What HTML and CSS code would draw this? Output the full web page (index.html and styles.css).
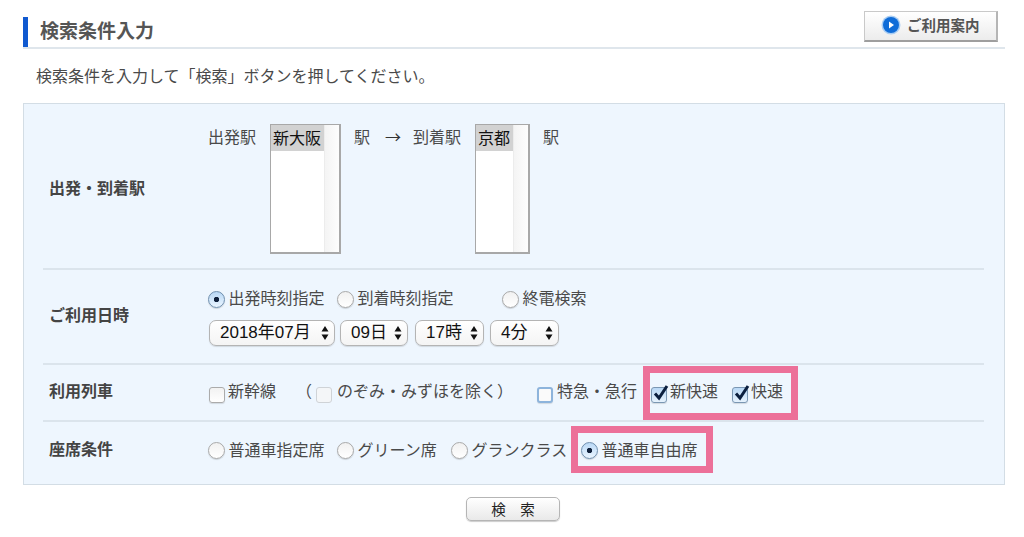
FILE: index.html
```html
<!DOCTYPE html>
<html lang="ja">
<head>
<meta charset="utf-8">
<title>検索条件入力</title>
<link rel="stylesheet" href="styles.css">
</head>
<body>
<main class="page">
  <header class="head">
    <h1 class="title">検索条件入力</h1>
    <a class="guide">
      <svg class="guide-icon" viewBox="0 0 20 20" width="20" height="20"><circle cx="10" cy="10" r="9.5" fill="#a9cdf3"/><circle cx="10" cy="10" r="8" fill="#0f6cd8"/><path d="M8 6.5 L13 10 L8 13.5 Z" fill="#fff"/></svg>
      <span>ご利用案内</span>
    </a>
  </header>
  <p class="lead">検索条件を入力して「検索」ボタンを押してください。</p>
  <section class="panel">
    <div class="row row-station">
      <div class="label">出発・到着駅</div>
      <div class="stations">
        <span class="st-text">出発駅</span>
        <div class="listbox lb-from"><div class="lb-main"><div class="lb-sel">新大阪</div></div><div class="lb-bar"></div></div>
        <span class="st-text st-eki">駅</span>
        <span class="st-text st-arrow">→</span>
        <span class="st-text st-to">到着駅</span>
        <div class="listbox lb-to"><div class="lb-main"><div class="lb-sel">京都</div></div><div class="lb-bar"></div></div>
        <span class="st-text st-eki">駅</span>
      </div>
    </div>
    <div class="row row-date">
      <div class="label">ご利用日時</div>
      <div class="controls">
        <div class="line line-time">
          <label class="opt w-a"><span class="radio on"></span>出発時刻指定</label>
          <label class="opt w-b"><span class="radio"></span>到着時刻指定</label>
          <label class="opt"><span class="radio"></span>終電検索</label>
        </div>
        <div class="line selects">
          <div class="select s1"><span>2018年07月</span><svg class="updown" viewBox="0 0 8 14" width="8" height="14"><path d="M4 0 L7.5 5.5 H.5 Z M4 14 L.5 8.5 H7.5 Z" fill="#111"/></svg></div>
          <div class="select s2"><span>09日</span><svg class="updown" viewBox="0 0 8 14" width="8" height="14"><path d="M4 0 L7.5 5.5 H.5 Z M4 14 L.5 8.5 H7.5 Z" fill="#111"/></svg></div>
          <div class="select s3"><span>17時</span><svg class="updown" viewBox="0 0 8 14" width="8" height="14"><path d="M4 0 L7.5 5.5 H.5 Z M4 14 L.5 8.5 H7.5 Z" fill="#111"/></svg></div>
          <div class="select s4"><span>4分</span><svg class="updown" viewBox="0 0 8 14" width="8" height="14"><path d="M4 0 L7.5 5.5 H.5 Z M4 14 L.5 8.5 H7.5 Z" fill="#111"/></svg></div>
        </div>
      </div>
    </div>
    <div class="row row-train">
      <div class="label">利用列車</div>
      <div class="line train">
        <label class="opt t1"><span class="check"></span>新幹線</label>
        <span class="paren-open">（</span>
        <label class="opt t2"><span class="check dim"></span>のぞみ・みずほを除く）</label>
        <label class="opt t3"><span class="check focus"></span>特急・急行</label>
        <label class="opt t4"><span class="check on"><svg class="tick" viewBox="0 0 18 18" width="18" height="18"><path d="M3 9.5 L7 14 L15 2" fill="none" stroke="#0b1f3f" stroke-width="3"/></svg></span>新快速</label>
        <label class="opt t5"><span class="check on"><svg class="tick" viewBox="0 0 18 18" width="18" height="18"><path d="M3 9.5 L7 14 L15 2" fill="none" stroke="#0b1f3f" stroke-width="3"/></svg></span>快速</label>
      </div>
      <div class="mark mark-train"></div>
    </div>
    <div class="row row-seat">
      <div class="label">座席条件</div>
      <div class="line seat">
        <label class="opt w-a"><span class="radio"></span>普通車指定席</label>
        <label class="opt w-c"><span class="radio"></span>グリーン席</label>
        <label class="opt w-d"><span class="radio"></span>グランクラス</label>
        <label class="opt"><span class="radio on"></span>普通車自由席</label>
      </div>
      <div class="mark mark-seat"></div>
    </div>
  </section>
  <div class="actions"><button class="search" type="button">検　索</button></div>
</main>
</body>
</html>
```

FILE: styles.css
```css
* { box-sizing: border-box; }
html, body { margin: 0; padding: 0; background: #fff; }
body {
  font-family: "Noto Sans CJK JP", "Liberation Sans", sans-serif;
  font-size: 16px;
  line-height: 24px;
  color: #4a4a4a;
  width: 1024px;
  height: 537px;
  overflow: hidden;
}
.page { width: 982px; margin-left: 23px; padding-top: 11px; }

.head {
  display: flex;
  justify-content: space-between;
  align-items: flex-start;
  height: 38px;
  border-bottom: 2px solid #dfe6ec;
  padding-right: 7px;
}
.title {
  margin: 6px 0 0;
  height: 30px;
  font-size: 19px;
  line-height: 26px;
  font-weight: 700;
  color: #555;
  border-left: 5px solid #1059d0;
  padding-left: 12px;
}
.guide {
  width: 134px;
  height: 31px;
  display: flex;
  align-items: center;
  gap: 6px;
  padding-left: 16px;
  padding-bottom: 2px;
  font-size: 14.5px;
  font-weight: 700;
  color: #555;
  background: linear-gradient(#fff, #ececec);
  border: 1px solid #c9c9c9;
  border-bottom: 2px solid #9e9e9e;
  border-right: 2px solid #b5b5b5;
}
.guide-icon { flex: none; }

.lead { margin: 14px 0 0 13px; height: 24px; }

.panel {
  margin-top: 16px;
  height: 382px;
  background: #eef6fe;
  border: 1px solid #d3dde5;
  padding: 0 20px 0 19px;
}
.row {
  position: relative;
  display: flex;
  align-items: center;
  border-bottom: 2px solid #dbe4ec;
}
.row-station { height: 166px; }
.row-date { height: 95px; }
.row-train { height: 57px; }
.row-seat { height: 62px; border-bottom: 0; }
.label {
  flex: none;
  width: 165px;
  padding-left: 6px;
  font-weight: 700;
  color: #444;
}
.row-station .label { padding-top: 2px; }
.row-date .label { padding-bottom: 6px; }
.row-train .label { padding-bottom: 6px; }
.row-seat .label { padding-bottom: 10px; }

.stations { display: flex; align-items: flex-start; align-self: flex-start; padding-top: 20px; }
.st-text { display: block; line-height: 24px; }
.st-eki { margin-left: 13px; }
.st-arrow { margin-left: 15px; color: #333; }
.st-to { margin-left: 12px; }
.listbox {
  display: flex;
  height: 130px;
  margin-left: 14px;
  background: #fff;
  border-style: solid;
  border-width: 1px 2px 2px 1px;
  border-color: #a8a8a8;
}
.lb-from { width: 71px; }
.lb-to { width: 55px; }
.lb-main { flex: 1; }
.lb-sel {
  height: 26px;
  padding-left: 2px;
  line-height: 24px;
  background: #d2d2d2;
  color: #111;
}
.lb-bar {
  flex: none;
  width: 15px;
  background: linear-gradient(90deg, #f4f4f4, #fdfdfd);
  border-left: 1px solid #ececec;
}

.controls { display: flex; flex-direction: column; gap: 10px; padding-bottom: 2px; }
.line { display: flex; align-items: center; height: 24px; }
.line-time { padding-bottom: 2px; }
.opt { display: flex; align-items: center; white-space: nowrap; }
.radio {
  flex: none;
  width: 17px;
  height: 17px;
  margin-right: 3.5px;
  margin-top: 4px;
  border-radius: 50%;
  border: 1px solid #a9a9a9;
  background: linear-gradient(#f1f1f1, #fff);
  box-shadow: 0 1px 1px rgba(0,0,0,.15);
}
.line-time .radio { margin-top: 6px; }
.radio.on {
  border-color: #6f8fae;
  background: radial-gradient(circle, #10213c 0 2.4px, transparent 3px), linear-gradient(#b9d8f6, #eaf5ff);
}
.w-a { width: 129px; }
.w-b { width: 165px; }
.w-c { width: 114px; }
.w-d { width: 130px; }

.selects { height: 26px; margin-left: 1px; }
.select {
  position: relative;
  height: 26px;
  display: flex;
  align-items: center;
  justify-content: space-between;
  padding: 0 5px 0 10px;
  margin-right: 5px;
  font-family: "Liberation Sans", "Noto Sans CJK JP", sans-serif;
  font-size: 17px;
  color: #111;
  background: linear-gradient(#fff, #f4f4f4);
  border: 1px solid #b4b4b4;
  border-radius: 7px;
  box-shadow: 0 1px 1px rgba(0,0,0,.12);
}
.s1 { width: 126px; }
.s2 { width: 68px; margin-right: 7px; }
.s3 { width: 69px; margin-right: 6px; }
.s4 { width: 69px; }

.check {
  position: relative;
  flex: none;
  width: 16px;
  height: 16px;
  margin-top: 9px;
  margin-right: 3px;
  border: 1px solid #ababab;
  border-radius: 3px;
  background: linear-gradient(#f2f2f2, #fff);
  box-shadow: 0 1px 1px rgba(0,0,0,.12);
}
.check.dim { border-color: #cfd3d7; background: #f4f6f8; box-shadow: none; margin-right: 5px; }
.check.focus { border: 2px solid #8db4dc; background: #fafafa; margin-right: 4px; }
.check.on { border-color: #7b97b3; background: linear-gradient(#b9d8f6, #e6f2fd); margin-right: 3px; }
.tick { position: absolute; left: 0; top: -4px; }
.train { margin-left: 1px; padding-bottom: 5px; }
.t1 { width: 87px; }
.paren-open { width: 20px; }
.t2 { width: 221px; }
.t3 { width: 114px; }
.t4 { width: 81px; }

.seat { padding-bottom: 9px; }

.mark {
  position: absolute;
  border: 7px solid #ec7099;
  pointer-events: none;
}
.mark-train { left: 600px; top: 1px; width: 155px; height: 54px; }
.mark-seat { left: 528px; top: 4px; width: 142px; height: 47px; }

.actions { display: flex; justify-content: center; padding-top: 12px; padding-right: 2px; }
.search {
  width: 94px;
  height: 24px;
  padding: 0;
  font-family: inherit;
  font-size: 14.5px;
  font-weight: 400;
  line-height: 20px;
  color: #222;
  background: linear-gradient(#fff, #e9e9e9);
  border: 1px solid #b5b5b5;
  border-radius: 5px;
  box-shadow: 0 1px 1px rgba(0,0,0,.2);
}
```
